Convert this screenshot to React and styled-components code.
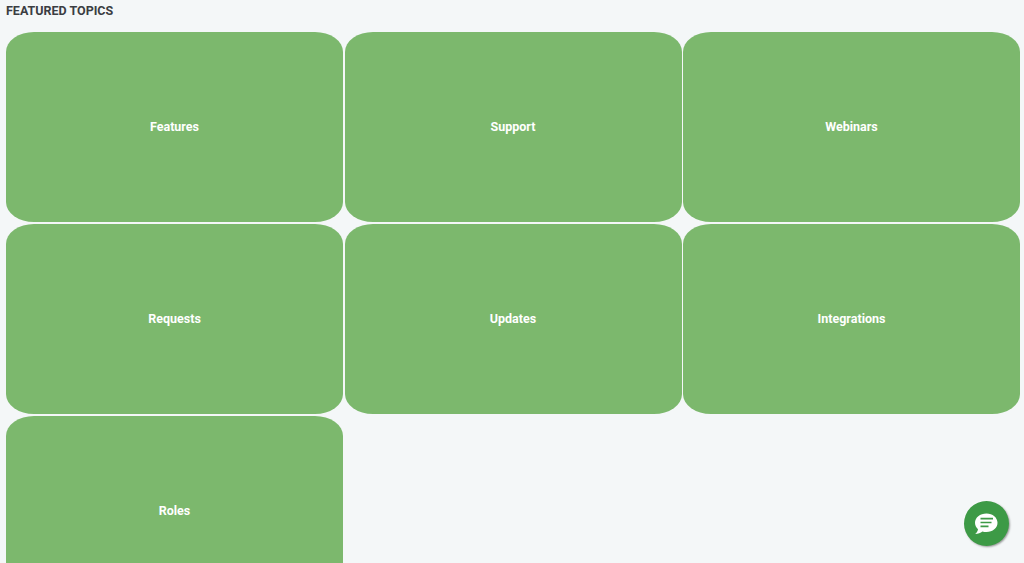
import React from "react";
import styled, { createGlobalStyle } from "styled-components";

const Global = createGlobalStyle`
  html, body { margin: 0; padding: 0; height: 563px; overflow: hidden; background: #f4f7f8; }
  * { box-sizing: border-box; }
`;

const Page = styled.main`
  height: 563px;
  overflow: hidden;
  padding: 3px 4px 0 6px;
  font-family: Roboto, "Liberation Sans", sans-serif;
`;

const Heading = styled.h2`
  margin: 0 0 13px;
  height: 16px;
  font-size: 12.5px;
  line-height: 16px;
  font-weight: 700;
  color: #3a3d42;
`;

const Grid = styled.div`
  display: grid;
  grid-template-columns: repeat(3, 1fr);
  grid-auto-rows: 190px;
  column-gap: 1.5px;
  row-gap: 2px;
`;

const Topic = styled.a`
  display: flex;
  align-items: center;
  justify-content: center;
  background: #7cb86d;
  border-radius: 28px / 20px;
  color: #ffffff;
  font-size: 12.5px;
  line-height: 15px;
  font-weight: 700;
  padding-bottom: 2px;
`;

const ChatButton = styled.button`
  position: fixed;
  left: 964px;
  top: 501px;
  width: 45px;
  height: 45px;
  border: none;
  padding: 0;
  border-radius: 50%;
  background: #3d9a46;
  box-shadow: 1px 1px 2px rgba(0, 0, 0, 0.4), 0 0 0 1px rgba(255, 255, 255, 0.6);
  display: flex;
  align-items: center;
  justify-content: center;
`;

const ChatIcon = styled.svg`
  display: block;
  margin: 1px 1px 0 0;
`;

const topics = ["Features", "Support", "Webinars", "Requests", "Updates", "Integrations", "Roles"];

export default function App() {
  return (
    <Page>
      <Global />
      <Heading>FEATURED TOPICS</Heading>
      <Grid>
        {topics.map((t) => (
          <Topic key={t}>{t}</Topic>
        ))}
      </Grid>
      <ChatButton aria-label="Chat">
        <ChatIcon width="24" height="22" viewBox="0 0 24 22">
          <path
            d="M12.500.5C6 .5 1 4.600 1 9.800c0 2.500 1.100 4.700 3 6.400-.2 1.700-1.200 3.400-2.800 4.800 2.900-.2 5.400-1.200 7.200-2.600 1.200.4 2.600.6 4.100.6 6.200 0 11-4 11-9.200S18.700.5 12.500.5z"
            fill="#fff"
          />
          <path d="M6.500 5.700h12.500M6.500 9.500h11M6.500 13.300h8" stroke="#3d9a46" strokeWidth="1.700" fill="none" />
        </ChatIcon>
      </ChatButton>
    </Page>
  );
}
